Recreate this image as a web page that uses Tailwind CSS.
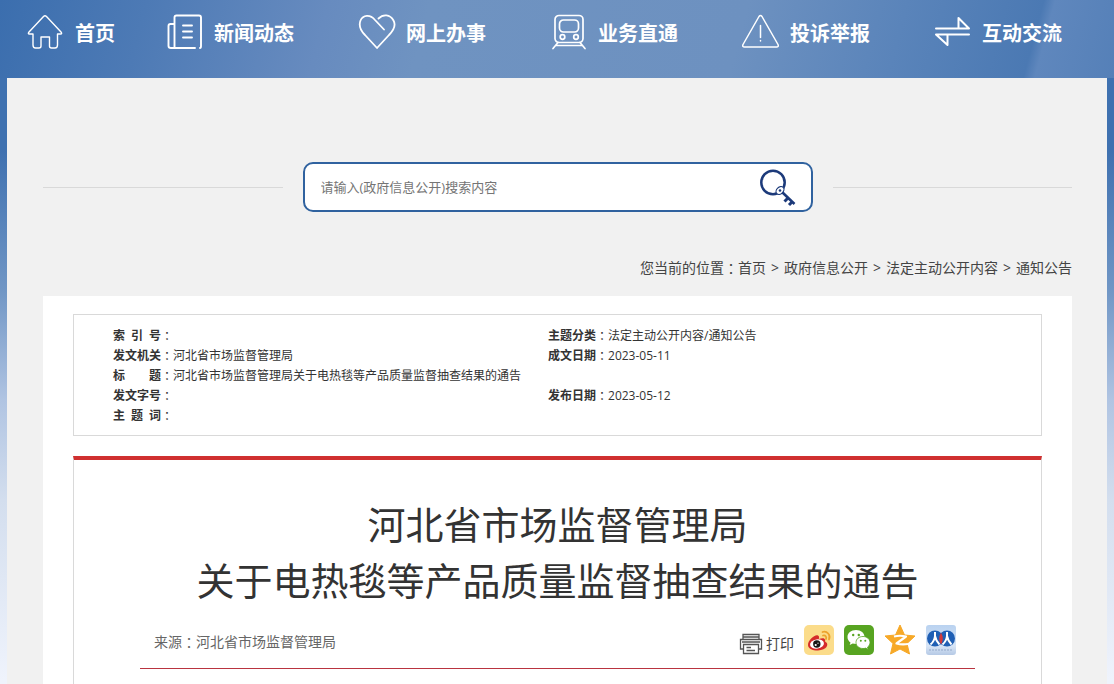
<!DOCTYPE html>
<html lang="zh-CN">
<head>
  <meta charset="UTF-8">
  <meta name="viewport" content="width=device-width, initial-scale=1.0">
  <title>河北省市场监督管理局</title>
  <script src="https://cdn.jsdelivr.net/npm/@tailwindcss/browser@4"></script>
</head>
<body class="min-h-screen overflow-x-hidden bg-[linear-gradient(to_bottom,#3f71b0_150px,#7096c5_290px,#b0c4e2_400px,#d3deee_500px,#eff3fc_680px)] font-['Open_Sans','Noto_Sans_CJK_SC',sans-serif] text-[#333]">
  <!-- Navigation -->
  <nav class="flex h-[78px] justify-between bg-[linear-gradient(105deg,#3b6eae_0%,#4d7ab5_13%,#678bbf_29%,#6f93c1_38%,#6d91c0_66%,#5a84ba_80%,#4b79b3_92%,#5f87bd_93%,#5580b8_100%)] pt-[14px] pl-[27px] pr-[52px] text-xl font-bold text-white">
    <a href="#" class="-mr-[13px] flex h-9 items-center gap-[10px] whitespace-nowrap">
      <svg class="size-[38px]" viewBox="0 0 38 38" fill="none" stroke="currentColor" stroke-width="1.4" stroke-linejoin="round" stroke-linecap="round"><path d="M6 21H2.500Q.5 21 2 19L16.500 3.500Q18 2 19.500 3.500L34 19Q35.500 21 33.500 21H30.500V32Q30.500 35 28 35H24.500Q22.500 35 22.500 33V24H14V33Q14 35 12 35H8.500Q6 35 6 32Z"/></svg>
      <span class="pt-[3px]">首页</span>
    </a>
    <a href="#" class="flex h-9 items-center gap-[10px] whitespace-nowrap">
      <svg class="size-[38px]" viewBox="0 0 38 38" fill="none" stroke="currentColor" stroke-width="1.900" stroke-linejoin="round" stroke-linecap="round"><path d="M8.500 35V4.500Q8.500 2.500 10.500 2.500H33Q35 2.500 35 4.500V33Q35 35 34 35M29 35H5Q2.500 35 2.500 33V13Q2.500 11 4.500 11H8.500M17 12.500H26M17 18.500H26M17 24.500H26"/></svg>
      <span class="pt-[3px]">新闻动态</span>
    </a>
    <a href="#" class="flex h-9 items-center gap-[10px] whitespace-nowrap">
      <svg class="size-[38px]" viewBox="0 0 38 38" fill="none" stroke="currentColor" stroke-width="1.800" stroke-linejoin="round" stroke-linecap="round"><path d="M26 16.500 17 7C12 1 5 2 2.500 7.500C0 14 4 19 7 22L19 35 31 22C35 18 38.500 13 35.500 7.500C32 1 25 1 20.500 5.500"/></svg>
      <span class="pt-[3px]">网上办事</span>
    </a>
    <a href="#" class="flex h-9 items-center gap-[10px] whitespace-nowrap">
      <svg class="size-[38px]" viewBox="0 0 38 38" fill="none" stroke="currentColor" stroke-width="1.700" stroke-linejoin="round" stroke-linecap="round"><rect x="5" y="2.500" width="28" height="27" rx="4"/><rect x="9.500" y="7" width="19" height="12" rx="4"/><circle cx="12.500" cy="24" r="2.300"/><circle cx="26" cy="24" r="2.300"/><path d="M8 29.500 3 35.500M30 29.500 35 35.500M6 32.500H32"/></svg>
      <span class="pt-[3px]">业务直通</span>
    </a>
    <a href="#" class="flex h-9 items-center gap-[10px] whitespace-nowrap">
      <svg class="size-[38px]" viewBox="0 0 38 38" fill="none" stroke="currentColor" stroke-width="1.500" stroke-linejoin="round" stroke-linecap="round"><path d="M17 3.500Q18.500 1.500 20 3.500L36 31.500Q37 34 34.500 34H2.500Q0 34 1 31.500ZM18.500 12.500V24.500M18.500 27.500V28"/></svg>
      <span class="pt-[3px]">投诉举报</span>
    </a>
    <a href="#" class="flex h-9 items-center gap-[10px] whitespace-nowrap">
      <svg class="size-[38px]" viewBox="0 0 38 38" fill="none" stroke="currentColor" stroke-width="2" stroke-linejoin="round" stroke-linecap="round"><path d="M2 15.500H35L24.500 5V14.500M35 21.500H2L13.500 32V22.500"/></svg>
      <span class="pt-[3px]">互动交流</span>
    </a>
  </nav>

  <main class="mx-[7px] bg-[#f1f1f1] pt-[84px] pr-[35px] pl-9">
    <!-- Search -->
    <div class="flex items-center gap-5">
      <div class="h-px flex-1 bg-[#d9d9d9]"></div>
      <form class="flex h-[50px] w-[510px] items-center rounded-[10px] border-2 border-[#30629f] bg-white pl-4 pr-[14px]">
        <input type="text" aria-label="搜索" placeholder="请输入(政府信息公开)搜索内容" class="min-w-0 flex-1 pt-[2px] text-[13px] outline-none placeholder:text-[#757575]">
        <button type="submit" aria-label="搜索">
          <svg class="size-10" viewBox="0 0 40 40" fill="none" stroke="#1c3a7a"><circle cx="16" cy="15.500" r="11.700" stroke-width="2.500"/><path d="M25 25 37.500 37" stroke-width="2.600"/><path d="M31 31 27.500 34.500M35.500 34.500 32 38" stroke-width="3"/><ellipse cx="23" cy="23.500" rx="4.500" ry="3.300" transform="rotate(-45 23 23.500)" fill="#fff" stroke-width="1.200"/><circle cx="23" cy="23.500" r="1.300" fill="#1c3a7a" stroke="none"/></svg>
        </button>
      </form>
      <div class="h-px flex-1 bg-[#d9d9d9]"></div>
    </div>

    <!-- Breadcrumb -->
    <div class="flex h-[84px] items-center justify-end gap-[5px] pt-7 text-sm text-[#444]">
      <span class="flex">您当前的位置<span class="font-['Noto_Sans_CJK_TC',sans-serif]">：</span><a href="#">首页</a></span>
      <span>&gt;</span>
      <a href="#">政府信息公开</a>
      <span>&gt;</span>
      <a href="#">法定主动公开内容</a>
      <span>&gt;</span>
      <a href="#">通知公告</a>
    </div>

    <div class="bg-white px-[30px] pt-[18px]">
      <!-- Document information -->
      <div class="border border-[#d9d9d9] pt-[11px] pb-[9px] pl-[39px]">
        <table class="w-full table-fixed text-xs leading-5">
          <tbody>
            <tr class="h-5">
              <td class="w-[435px]"><div class="flex h-5"><b class="flex w-12 justify-between"><span>索</span><span>引</span><span>号</span></b><span class="font-['Noto_Sans_CJK_TC',sans-serif]">：</span></div></td>
              <td><div class="flex h-5"><b>主题分类</b><span class="font-['Noto_Sans_CJK_TC',sans-serif]">：</span>法定主动公开内容/通知公告</div></td>
            </tr>
            <tr class="h-5">
              <td><div class="flex h-5"><b>发文机关</b><span class="font-['Noto_Sans_CJK_TC',sans-serif]">：</span>河北省市场监督管理局</div></td>
              <td><div class="flex h-5"><b>成文日期</b><span class="font-['Noto_Sans_CJK_TC',sans-serif]">：</span>2023-05-11</div></td>
            </tr>
            <tr class="h-5">
              <td colspan="2"><div class="flex h-5"><b class="flex w-12 justify-between"><span>标</span><span>题</span></b><span class="font-['Noto_Sans_CJK_TC',sans-serif]">：</span>河北省市场监督管理局关于电热毯等产品质量监督抽查结果的通告</div></td>
            </tr>
            <tr class="h-5">
              <td><div class="flex h-5"><b>发文字号</b><span class="font-['Noto_Sans_CJK_TC',sans-serif]">：</span></div></td>
              <td><div class="flex h-5"><b>发布日期</b><span class="font-['Noto_Sans_CJK_TC',sans-serif]">：</span>2023-05-12</div></td>
            </tr>
            <tr class="h-5">
              <td colspan="2"><div class="flex h-5"><b class="flex w-12 justify-between"><span>主</span><span>题</span><span>词</span></b><span class="font-['Noto_Sans_CJK_TC',sans-serif]">：</span></div></td>
            </tr>
          </tbody>
        </table>
      </div>

      <!-- Article -->
      <article class="mt-5 min-h-[230px] border-x border-t-4 border-x-[#d9d9d9] border-t-[#d03030] px-[66px] pt-9">
        <h1 class="text-center text-[38px] leading-[56px] font-normal">河北省市场监督管理局<br>关于电热毯等产品质量监督抽查结果的通告</h1>
        <div class="flex h-[60px] items-center justify-between pt-1 pr-[19px] pl-[14px] text-sm text-[#666]">
          <span class="flex pt-1">来源<span class="font-['Noto_Sans_CJK_TC',sans-serif]">：</span>河北省市场监督管理局</span>
          <div class="flex items-center gap-[10px]">
            <button type="button" class="flex items-center gap-[3px] pt-2 text-[#444]">
              <svg class="h-[22px] w-6" viewBox="0 0 24 22" fill="none" stroke="#555" stroke-width="1.300"><path d="M4 6V1.500H20V6M4 4H20M4 16H1.500V6.500H22.500V16H20M3 9H21M4.500 11.500H19.500V20.500H4.500ZM7.500 14.500H12M7.500 17.500H16"/></svg>
              <span>打印</span>
            </button>
            <a href="#" aria-label="新浪微博">
              <svg class="size-[30px]" viewBox="0 0 30 30"><rect width="30" height="30" rx="5" fill="#fbdc8a"/><path d="M4 20C4 15 11 9 14 10.500C16 11.500 14.500 13.500 15 14C17 13.500 20 12.500 21 14.500C21.500 16 20.500 16.500 22 17.200C25 19 23 25 14 25.500C8 25.500 4 23.500 4 20Z" fill="#d52b2a"/><ellipse cx="13" cy="19" rx="7" ry="4.600" fill="#fff" transform="rotate(-8 13 19)"/><circle cx="12.800" cy="19" r="3.700" fill="#161616"/><circle cx="11.700" cy="20" r="1.100" fill="#fff"/><circle cx="14" cy="18.200" r=".6" fill="#fff"/><path d="M18.500 7C23 5.500 27 10 25 14.500M19 10.500C21.500 9.800 22.800 12 22 14" fill="none" stroke="#eca32c" stroke-width="1.800" stroke-linecap="round"/></svg>
            </a>
            <a href="#" aria-label="微信">
              <svg class="size-[30px]" viewBox="0 0 30 30"><rect width="30" height="30" rx="5" fill="#57a421"/><path d="M12 5C7 5 3.500 8 3.500 12C3.500 14.300 4.600 16.200 6.500 17.500L5.700 20 8.700 18.600C9.800 18.900 11 19 12 19C17 19 20.500 16 20.500 12S17 5 12 5Z" fill="#fff"/><path d="M19 11.500C15 11.500 12 14 12 17.500S15 23.500 19 23.500C20 23.500 20.900 23.400 21.700 23.100L24.200 24.500 23.500 22.200C25 21 26 19.500 26 17.500C26 14 23 11.500 19 11.500Z" fill="#fff" stroke="#57a421" stroke-width=".8"/><g fill="#57a421"><circle cx="9.200" cy="10" r="1.200"/><circle cx="14.800" cy="10" r="1.200"/><circle cx="16.800" cy="15.800" r="1"/><circle cx="21.300" cy="15.800" r="1"/></g></svg>
            </a>
            <a href="#" aria-label="QQ空间">
              <svg class="size-[32px]" viewBox="0 0 32 32"><path d="M16 1 20.500 11 31 12 23 19.500 25.500 30 16 25 6.500 30 9 19.500 1 12 11.500 11Z" fill="#f7a928" stroke="#f7a928" stroke-linejoin="round"/><path d="M10 12.500C14 11.500 18 11.500 22 12.500L12.500 19.500C16 20.500 20 20.700 24 20" fill="none" stroke="#fff" stroke-width="2.200" stroke-linejoin="round"/></svg>
            </a>
            <a href="#" aria-label="人民网">
              <svg class="size-[30px]" viewBox="0 0 30 30"><defs><linearGradient id="sky" x2="0" y2="1"><stop stop-color="#b9d2f0"/><stop offset=".7" stop-color="#d8e5f6"/><stop offset="1" stop-color="#b5c9e5"/></linearGradient></defs><rect width="30" height="30" rx="3" fill="url(#sky)"/><circle cx="9" cy="13.500" r="8" fill="#1f5fb4"/><circle cx="21" cy="13.500" r="8" fill="#1f5fb4"/><path d="M15 7.500Q18.500 13.500 15 19.500Q11.500 13.500 15 7.500Z" fill="#d43a3a"/><path d="M9 7V11Q8.500 16 4.500 19.500M9 11Q10 16 13.500 19.500M21 7V11Q20.500 16 16.500 19.500M21 11Q22 16 25.500 19.500" fill="none" stroke="#fff" stroke-width="2"/><path d="M3 25H27" stroke="#a5b9d6" stroke-width="1.500" stroke-dasharray="2 1"/></svg>
            </a>
          </div>
        </div>
        <hr class="border-0 border-t border-t-[#b93440]">
      </article>
    </div>
  </main>
</body>
</html>
